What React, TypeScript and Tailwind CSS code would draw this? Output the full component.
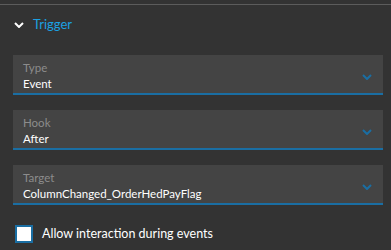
import React from "react";

const Chevron = ({ className }: { className?: string }) => (
  <svg width="10" height="6" viewBox="0 0 10 6" className={className}>
    <path d="M1 1 L5 5 L9 1" fill="none" stroke="currentColor" strokeWidth="2" />
  </svg>
);

const Field = ({ label, value }: { label: string; value: string }) => (
  <div className="flex h-[40px] items-start bg-[#444444] border-b-2 border-[#1a6ea3] pl-[10px] pr-[11px] pt-[5px]">
    <div className="flex flex-1 flex-col leading-[16px]">
      <span className="text-[11.5px] text-[#8c8c8c]">{label}</span>
      <span className="text-[11.5px] text-white">{value}</span>
    </div>
    <Chevron className="text-[#1a6ea3] mt-[14px]" />
  </div>
);

export default function App() {
  return (
    <div className="h-[250px] w-[391px] bg-[#333333] overflow-hidden" style={{ fontFamily: "Lato, 'Noto Sans', sans-serif" }}>
      <div className="h-[4px]" />
      <div className="h-[1px] bg-[#5c5c5c]" />
      <div className="flex items-center h-[40px] pl-[14px] gap-[9px]">
        <Chevron className="text-white" />
        <span className="text-[13px] text-[#1ba1e2]">Trigger</span>
      </div>
      <div className="flex flex-col gap-[15px] pl-[13px] pr-[8px] pt-[10px]">
        <Field label="Type" value="Event" />
        <Field label="Hook" value="After" />
        <Field label="Target" value="ColumnChanged_OrderHedPayFlag" />
      </div>
      <div className="flex items-center gap-[9px] pl-[15px] pt-[20px]">
        <div className="h-[18px] w-[18px] bg-white border-2 border-[#1a6ea3]" />
        <span className="text-[12.5px] text-white">Allow interaction during events</span>
      </div>
    </div>
  );
}
